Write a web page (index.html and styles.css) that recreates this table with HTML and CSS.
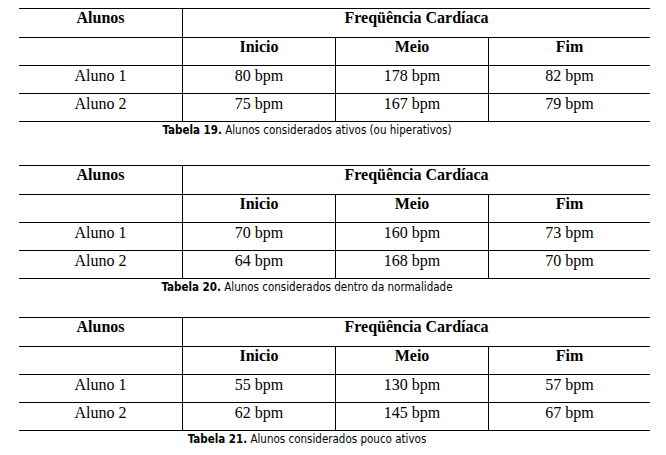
FILE: index.html
```html
<!DOCTYPE html>
<html lang="pt">
<head>
<meta charset="utf-8">
<title>Tabelas</title>
<link rel="stylesheet" href="styles.css">
</head>
<body>
<div class="page">
  <figure class="block block-1">
    <table class="grid">
      <colgroup><col class="c1"><col class="c2"><col class="c3"><col class="c4"></colgroup>
      <tr class="first"><th>Alunos</th><th colspan="3" class="sep">Freqüência Cardíaca</th></tr>
      <tr><th></th><th class="sep">Inicio</th><th class="sep">Meio</th><th class="sep">Fim</th></tr>
      <tr><td>Aluno 1</td><td class="sep">80 bpm</td><td class="sep">178 bpm</td><td class="sep">82 bpm</td></tr>
      <tr><td>Aluno 2</td><td class="sep">75 bpm</td><td class="sep">167 bpm</td><td class="sep">79 bpm</td></tr>
    </table>
    <figcaption class="cap"><b>Tabela 19.</b> Alunos considerados ativos (ou hiperativos)</figcaption>
  </figure>
  <figure class="block block-2">
    <table class="grid">
      <colgroup><col class="c1"><col class="c2"><col class="c3"><col class="c4"></colgroup>
      <tr class="first"><th>Alunos</th><th colspan="3" class="sep">Freqüência Cardíaca</th></tr>
      <tr><th></th><th class="sep">Inicio</th><th class="sep">Meio</th><th class="sep">Fim</th></tr>
      <tr><td>Aluno 1</td><td class="sep">70 bpm</td><td class="sep">160 bpm</td><td class="sep">73 bpm</td></tr>
      <tr><td>Aluno 2</td><td class="sep">64 bpm</td><td class="sep">168 bpm</td><td class="sep">70 bpm</td></tr>
    </table>
    <figcaption class="cap"><b>Tabela 20.</b> Alunos considerados dentro da normalidade</figcaption>
  </figure>
  <figure class="block block-3">
    <table class="grid">
      <colgroup><col class="c1"><col class="c2"><col class="c3"><col class="c4"></colgroup>
      <tr class="first"><th>Alunos</th><th colspan="3" class="sep">Freqüência Cardíaca</th></tr>
      <tr><th></th><th class="sep">Inicio</th><th class="sep">Meio</th><th class="sep">Fim</th></tr>
      <tr><td>Aluno 1</td><td class="sep">55 bpm</td><td class="sep">130 bpm</td><td class="sep">57 bpm</td></tr>
      <tr><td>Aluno 2</td><td class="sep">62 bpm</td><td class="sep">145 bpm</td><td class="sep">67 bpm</td></tr>
    </table>
    <figcaption class="cap"><b>Tabela 21.</b> Alunos considerados pouco ativos</figcaption>
  </figure>
</div>
</body>
</html>
```
FILE: styles.css
```css
html, body {
  margin: 0;
  padding: 0;
  background: #ffffff;
}

.page {
  padding: 8px 16px 0 19px;
  display: flex;
  flex-direction: column;
}

.block {
  margin: 0;
}

.block-1 { margin-bottom: 28px; }
.block-2 { margin-bottom: 23px; }

.grid {
  width: 631px;
  table-layout: fixed;
  border-collapse: separate;
  border-spacing: 0;
  border-top: 1px solid #000;
  font-family: "Liberation Serif", "Times New Roman", serif;
  font-size: 16px;
  line-height: 18px;
  color: #000;
}

.c1 { width: 163px; }
.c2 { width: 153px; }
.c3 { width: 153px; }
.c4 { width: 162px; }

.grid th,
.grid td {
  height: 28px;
  padding: 0 2px;
  box-sizing: border-box;
  border-bottom: 1px solid #000;
  text-align: center;
  vertical-align: top;
}

.grid th {
  font-weight: bold;
}

.grid td {
  padding-top: 1px;
  font-weight: normal;
}

.grid .first th {
  height: 29px;
}

.grid .sep {
  border-left: 1px solid #000;
}

.cap {
  margin-top: 2px;
  width: 631px;
  padding-right: 55px;
  box-sizing: border-box;
  text-align: center;
  font-family: "DejaVu Sans Condensed", "DejaVu Sans", sans-serif;
  font-size: 11.5px;
  line-height: 13px;
  color: #000;
}

.cap b {
  font-weight: bold;
}
```
